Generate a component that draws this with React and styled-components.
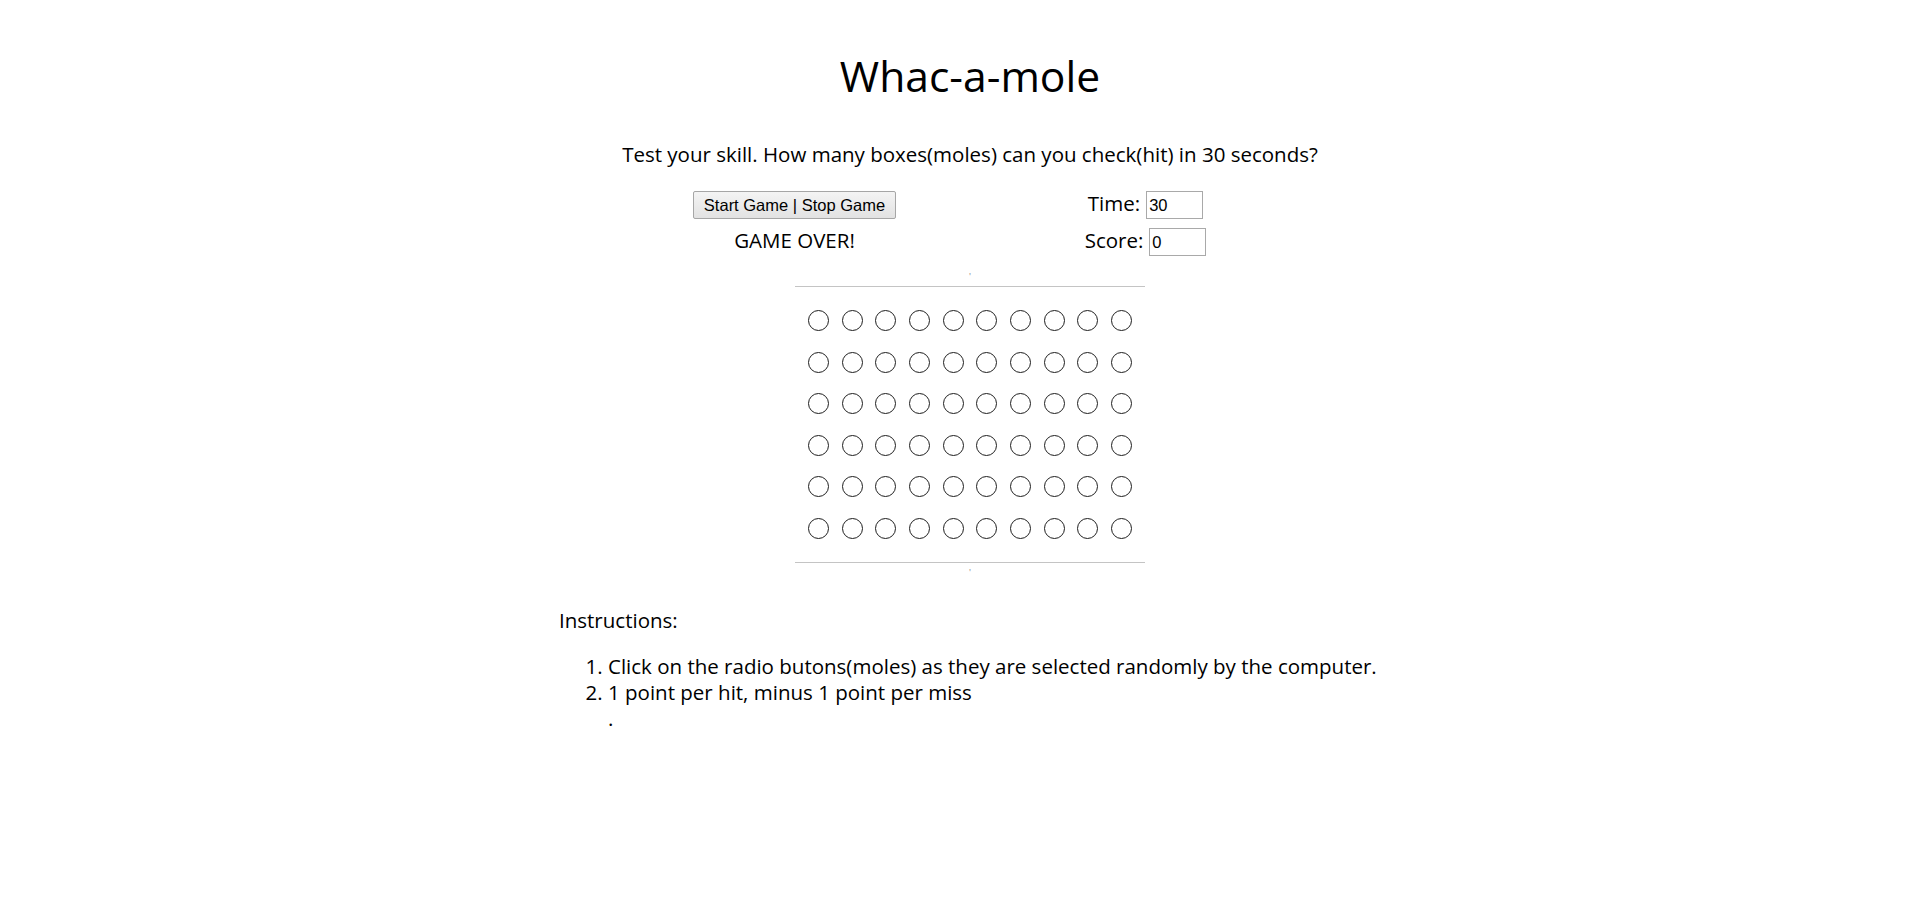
import styled, { createGlobalStyle } from 'styled-components';

const GlobalStyle = createGlobalStyle`
  html, body {
    margin: 0;
    padding: 0;
    background: #ffffff;
  }
  body {
    font-family: 'Open Sans', 'Noto Sans', sans-serif;
    font-size: 20.5px;
    line-height: 26px;
    color: #000000;
  }
`;

const Page = styled.div`
  padding-left: 10px;
`;

const Main = styled.div`
  width: 822px;
  margin: 0 auto;
  padding-bottom: 100px;
`;

const Title = styled.h1`
  margin: 47px 0 0;
  font-size: 42.6px;
  line-height: 57px;
  font-weight: 400;
  text-align: center;
`;

const Subtitle = styled.p`
  margin: 37px 0 0;
  text-align: center;
`;

const Controls = styled.div`
  display: grid;
  grid-template-columns: 351px 351px;
  grid-template-rows: 28px 28px;
  row-gap: 9px;
  justify-content: center;
  margin-top: 24px;
`;

const Cell = styled.div`
  display: flex;
  align-items: center;
  justify-content: center;
  gap: 6px;
`;

const Label = styled.span`
  padding-bottom: 4px;
`;

const Button = styled.button`
  width: 203px;
  height: 28px;
  padding: 0;
  font-family: 'Liberation Sans', Arial, sans-serif;
  font-size: 16.5px;
  color: #000000;
  background: linear-gradient(#f4f4f4, #e2e2e2);
  border: 1px solid #a6a6a6;
  border-radius: 2px;
  cursor: pointer;
`;

const Field = styled.input`
  box-sizing: border-box;
  width: 57px;
  height: 28px;
  padding: 0 2px;
  font-family: 'Liberation Sans', Arial, sans-serif;
  font-size: 16.5px;
  color: #000000;
  border: 1px solid #a9a9a9;
  outline: none;
`;

const Tick = styled.div`
  height: 10px;
  font-size: 9px;
  line-height: 10px;
  color: #888888;
  text-align: center;
  margin-top: ${(p) => p.$top}px;
`;

const Rule = styled.hr`
  width: 350px;
  height: 0;
  margin: ${(p) => p.$top}px auto 0;
  border: 0;
  border-top: 1px solid #c4c4c4;
`;

const Board = styled.div`
  display: grid;
  grid-template-columns: repeat(10, 21px);
  grid-auto-rows: 21px;
  column-gap: 12.7px;
  row-gap: 20.6px;
  justify-content: center;
  margin-top: 23px;
`;

const Mole = styled.input`
  appearance: none;
  box-sizing: border-box;
  width: 21px;
  height: 21px;
  margin: 0;
  border: 1px solid #1e1e1e;
  border-radius: 50%;
  background: #ffffff;
  cursor: pointer;

  &:checked {
    background: radial-gradient(circle, #333333 0 4px, #ffffff 5px);
  }
`;

const Heading = styled.p`
  margin: 29px 0 0;
`;

const Steps = styled.ol`
  margin: 20px 0 0;
  padding-left: 49px;
`;

const Trailer = styled.div`
  padding-left: 49px;
`;

const holes = Array.from({ length: 60 }, (_, i) => i);

export default function App() {
  return (
    <Page>
      <GlobalStyle />
      <Main>
        <Title>Whac-a-mole</Title>
        <Subtitle>Test your skill. How many boxes(moles) can you check(hit) in 30 seconds?</Subtitle>

        <Controls>
          <Cell>
            <Button type="button">Start Game | Stop Game</Button>
          </Cell>
          <Cell>
            <Label>Time:</Label>
            <Field type="text" defaultValue="30" readOnly />
          </Cell>
          <Cell>
            <Label>GAME OVER!</Label>
          </Cell>
          <Cell>
            <Label>Score:</Label>
            <Field type="text" defaultValue="0" readOnly />
          </Cell>
        </Controls>

        <Tick $top={16}>'</Tick>
        <Rule $top={4} />
        <Board>
          {holes.map((i) => (
            <Mole key={i} type="radio" name="mole" />
          ))}
        </Board>
        <Rule $top={23} />
        <Tick $top={5}>'</Tick>

        <Heading>Instructions:</Heading>
        <Steps>
          <li>Click on the radio butons(moles) as they are selected randomly by the computer.</li>
          <li>1 point per hit, minus 1 point per miss</li>
        </Steps>
        <Trailer>.</Trailer>
      </Main>
    </Page>
  );
}
